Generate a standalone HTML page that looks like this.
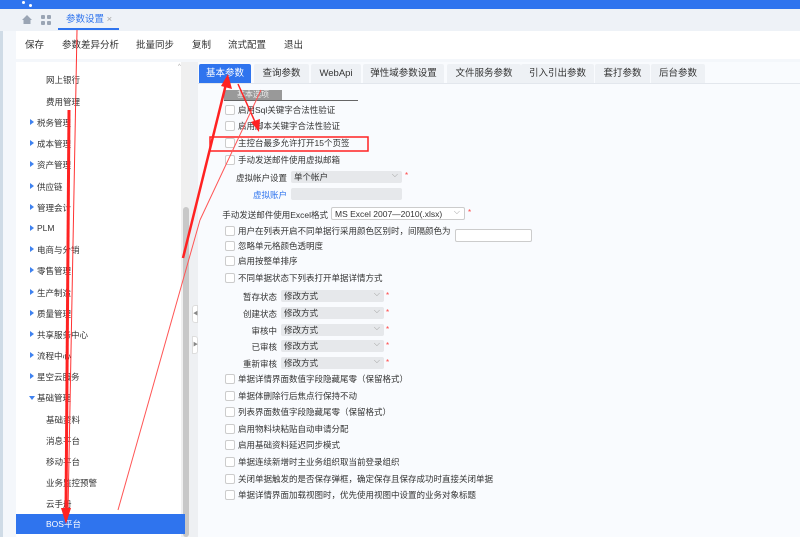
<!DOCTYPE html>
<html><head><meta charset="utf-8"><style>
*{margin:0;padding:0;box-sizing:border-box}
body{width:800px;height:537px;overflow:hidden;position:relative;background:#f4f7fb;font-family:"Liberation Sans","Noto Sans CJK SC",sans-serif;font-size:9px;color:#333}
.top{position:absolute;left:0;top:0;width:800px;height:9px;background:#2f74ee}
.tabbar{position:absolute;left:0;top:9px;width:800px;height:22px;background:#eef2f7}
.tb{position:absolute;left:16px;top:31px;width:784px;height:28px;background:#fff}
.tb span{position:absolute;top:6px;font-size:9.5px;color:#333}
.left{position:absolute;left:16px;top:62px;width:172px;height:475px;background:#fff}
.scroll{position:absolute;left:181px;top:62px;width:9px;height:475px;background:#f0f0f0}
.thumb{position:absolute;left:183px;top:207px;width:6px;height:330px;background:#c8c8c8;border-radius:3px}
.split{position:absolute;left:190px;top:62px;width:8px;height:475px;background:#eef0f3}
.item{position:absolute;font-size:8.5px;color:#333}
.tri{position:absolute;width:0;height:0;border-top:3.5px solid transparent;border-bottom:3.5px solid transparent;border-left:4px solid #3f82f0}
.right{position:absolute;left:198px;top:62px;width:602px;height:475px;background:#f9fbfe}
.tab{position:absolute;top:64px;height:19px;background:#eef1f5;font-size:9.5px;color:#333;text-align:center;line-height:19px;border-radius:2px 2px 0 0}
.cb{position:absolute;left:225px;width:10px;height:10px;border:1px solid #ccc;background:#fff;border-radius:2px}
.lb{position:absolute;left:238px;font-size:8.5px;color:#333}
.sel{position:absolute;height:12px;background:#e6e8eb;border-radius:2px;font-size:8.5px;line-height:12px;padding-left:3px}
.sel:after{content:"⌵";position:absolute;right:4px;top:-2px;color:#999;font-size:8px}
.star{position:absolute;color:#f44;font-size:8px}
.rl{position:absolute;font-size:8.5px;color:#333;text-align:right}
</style></head><body>
<div style="position:absolute;left:0;top:0;width:3px;height:537px;background:#cfdbe6"></div>
<div class="top"></div>
<div style="position:absolute;left:22px;top:1px;width:3px;height:3px;background:#fff;border-radius:50%"></div>
<div style="position:absolute;left:29px;top:4px;width:3px;height:3px;background:#fff;border-radius:50%"></div>
<div class="tabbar"></div>
<div style="position:absolute;left:22px;top:15px;width:10px;height:9px;"><svg width="10" height="9"><path d="M0 5L5 0L10 5H8.5V9H1.5V5Z" fill="#9aa5b4"/></svg></div>
<div style="position:absolute;left:41px;top:15px"><svg width="10" height="10"><rect x="0" y="0" width="4" height="4" rx="1" fill="#9aa5b4"/><rect x="6" y="0" width="4" height="4" rx="1" fill="#9aa5b4"/><rect x="0" y="6" width="4" height="4" rx="1" fill="#9aa5b4"/><rect x="6" y="6" width="4" height="4" rx="1" fill="#9aa5b4"/></svg></div>
<div style="position:absolute;left:58px;top:10px;width:61px;height:20px;border-bottom:2px solid #2f74ee;font-size:9.5px;color:#2f74ee;line-height:20px;padding-left:8px">参数设置 <span style="color:#aaa">×</span></div>
<div class="tb"><span style="left:9px">保存</span><span style="left:46px">参数差异分析</span><span style="left:120px">批量同步</span><span style="left:176px">复制</span><span style="left:212px">流式配置</span><span style="left:268px">退出</span></div>
<div class="left"></div>
<div class="scroll"></div><div class="thumb"></div>
<div style="position:absolute;left:178px;top:64px;font-size:6px;color:#aaa">^</div>
<div class="split"></div>
<div style="position:absolute;left:192px;top:305px;width:6px;height:18px;background:#fff;border:1px solid #ddd;border-radius:3px 0 0 3px;font-size:5px;color:#888;line-height:16px">◀</div>
<div style="position:absolute;left:192px;top:336px;width:6px;height:18px;background:#fff;border:1px solid #ddd;border-radius:0 3px 3px 0;font-size:5px;color:#888;line-height:16px">▶</div>

<div class="item" style="left:46px;top:74px">网上银行</div>
<div class="item" style="left:46px;top:96px">费用管理</div>
<div class="tri" style="left:30px;top:119px"></div><div class="item" style="left:37px;top:117px">税务管理</div>
<div class="tri" style="left:30px;top:140px"></div><div class="item" style="left:37px;top:138px">成本管理</div>
<div class="tri" style="left:30px;top:161px"></div><div class="item" style="left:37px;top:159px">资产管理</div>
<div class="tri" style="left:30px;top:183px"></div><div class="item" style="left:37px;top:181px">供应链</div>
<div class="tri" style="left:30px;top:204px"></div><div class="item" style="left:37px;top:202px">管理会计</div>
<div class="tri" style="left:30px;top:225px"></div><div class="item" style="left:37px;top:223px">PLM</div>
<div class="tri" style="left:30px;top:246px"></div><div class="item" style="left:37px;top:244px">电商与分销</div>
<div class="tri" style="left:30px;top:267px"></div><div class="item" style="left:37px;top:265px">零售管理</div>
<div class="tri" style="left:30px;top:289px"></div><div class="item" style="left:37px;top:287px">生产制造</div>
<div class="tri" style="left:30px;top:310px"></div><div class="item" style="left:37px;top:308px">质量管理</div>
<div class="tri" style="left:30px;top:331px"></div><div class="item" style="left:37px;top:329px">共享服务中心</div>
<div class="tri" style="left:30px;top:352px"></div><div class="item" style="left:37px;top:350px">流程中心</div>
<div class="tri" style="left:30px;top:373px"></div><div class="item" style="left:37px;top:371px">星空云服务</div>
<div style="position:absolute;left:29px;top:396px;border-left:3.5px solid transparent;border-right:3.5px solid transparent;border-top:4px solid #3f82f0"></div><div class="item" style="left:37px;top:392px">基础管理</div>
<div class="item" style="left:46px;top:414px">基础资料</div>
<div class="item" style="left:46px;top:435px">消息平台</div>
<div class="item" style="left:46px;top:456px">移动平台</div>
<div class="item" style="left:46px;top:477px">业务监控预警</div>
<div class="item" style="left:46px;top:498px">云手册</div>
<div style="position:absolute;left:16px;top:514px;width:169px;height:20px;background:#2f74ee"></div>
<div class="item" style="left:46px;top:518px;color:#fff">BOS平台</div>

<div class="right"></div>
<div style="position:absolute;left:198px;top:83px;width:602px;height:1px;background:#e3e7ed"></div>
<div class="tab" style="left:199px;width:52px;background:#2f74ee;color:#fff">基本参数</div>
<div class="tab" style="left:254px;width:55px">查询参数</div>
<div class="tab" style="left:311px;width:50px">WebApi</div>
<div class="tab" style="left:363px;width:81px">弹性域参数设置</div>
<div class="tab" style="left:447px;width:74px">文件服务参数</div>
<div class="tab" style="left:521px;width:73px">引入引出参数</div>
<div class="tab" style="left:595px;width:55px">套打参数</div>
<div class="tab" style="left:651px;width:54px">后台参数</div>

<div style="position:absolute;left:224px;top:90px;width:58px;height:10px;background:#999;color:#eee;font-size:8px;line-height:10px;text-align:center">基本选项</div>
<div style="position:absolute;left:224px;top:100px;width:134px;height:1px;background:#666"></div>

<div class="cb" style="top:105px"></div><div class="lb" style="top:104px">启用Sql关键字合法性验证</div>
<div class="cb" style="top:121px"></div><div class="lb" style="top:120px">启用脚本关键字合法性验证</div>
<div class="cb" style="top:138px"></div><div class="lb" style="top:137px">主控台最多允许打开15个页签</div>
<div class="cb" style="top:155px"></div><div class="lb" style="top:154px">手动发送邮件使用虚拟邮箱</div>
<div class="rl" style="left:220px;width:67px;top:172px">虚拟帐户设置</div>
<div class="sel" style="left:291px;top:171px;width:111px">单个帐户</div><div class="star" style="left:405px;top:171px">*</div>
<div class="rl" style="left:220px;width:67px;top:189px;color:#2f74ee">虚拟账户</div>
<div style="position:absolute;left:291px;top:188px;width:111px;height:12px;background:#e6e8eb;border-radius:2px"></div>
<div class="rl" style="left:220px;width:108px;top:209px">手动发送邮件使用Excel格式</div>
<div class="sel" style="left:331px;top:207px;width:134px;height:13px;background:#fff;border:1px solid #ccc">MS Excel 2007—2010(.xlsx)</div><div class="star" style="left:468px;top:208px">*</div>
<div class="cb" style="top:226px"></div><div class="lb" style="top:225px">用户在列表开启不同单据行采用颜色区别时，间隔颜色为</div>
<div style="position:absolute;left:455px;top:229px;width:77px;height:13px;background:#fff;border:1px solid #ccc;border-radius:2px"></div>
<div class="cb" style="top:241px"></div><div class="lb" style="top:240px">忽略单元格颜色透明度</div>
<div class="cb" style="top:256px"></div><div class="lb" style="top:255px">启用按整单排序</div>
<div class="cb" style="top:273px"></div><div class="lb" style="top:272px">不同单据状态下列表打开单据详情方式</div>
<div class="rl" style="left:230px;width:47px;top:291px">暂存状态</div><div class="sel" style="left:281px;top:290px;width:103px">修改方式</div><div class="star" style="left:386px;top:291px">*</div>
<div class="rl" style="left:230px;width:47px;top:308px">创建状态</div><div class="sel" style="left:281px;top:307px;width:103px">修改方式</div><div class="star" style="left:386px;top:308px">*</div>
<div class="rl" style="left:230px;width:47px;top:325px">审核中</div><div class="sel" style="left:281px;top:324px;width:103px">修改方式</div><div class="star" style="left:386px;top:325px">*</div>
<div class="rl" style="left:230px;width:47px;top:341px">已审核</div><div class="sel" style="left:281px;top:340px;width:103px">修改方式</div><div class="star" style="left:386px;top:341px">*</div>
<div class="rl" style="left:230px;width:47px;top:358px">重新审核</div><div class="sel" style="left:281px;top:357px;width:103px">修改方式</div><div class="star" style="left:386px;top:358px">*</div>
<div class="cb" style="top:374px"></div><div class="lb" style="top:373px">单据详情界面数值字段隐藏尾零（保留格式）</div>
<div class="cb" style="top:391px"></div><div class="lb" style="top:390px">单据体删除行后焦点行保持不动</div>
<div class="cb" style="top:407px"></div><div class="lb" style="top:406px">列表界面数值字段隐藏尾零（保留格式）</div>
<div class="cb" style="top:424px"></div><div class="lb" style="top:423px">启用物料块粘贴自动申请分配</div>
<div class="cb" style="top:440px"></div><div class="lb" style="top:439px">启用基础资料延迟同步模式</div>
<div class="cb" style="top:457px"></div><div class="lb" style="top:456px">单据连续新增时主业务组织取当前登录组织</div>
<div class="cb" style="top:474px"></div><div class="lb" style="top:473px">关闭单据触发的是否保存弹框，确定保存且保存成功时直接关闭单据</div>
<div class="cb" style="top:490px"></div><div class="lb" style="top:489px">单据详情界面加载视图时，优先使用视图中设置的业务对象标题</div>

<svg style="position:absolute;left:0;top:0" width="800" height="537">
<rect x="210" y="137" width="158" height="14" fill="none" stroke="#f22" stroke-width="1.5"/>
<line x1="77" y1="30" x2="68" y2="512" stroke="#f33" stroke-width="1"/>
<line x1="69" y1="110" x2="66" y2="512" stroke="#f22" stroke-width="3"/>
<path d="M61 508L66 524L71 508Z" fill="#f22"/>
<line x1="183" y1="258" x2="226" y2="84" stroke="#f22" stroke-width="2.5"/>
<path d="M221 86L228 74L232 89Z" fill="#f22"/>
<line x1="238" y1="84" x2="256" y2="124" stroke="#f22" stroke-width="1.5"/>
<path d="M251 122L259 132L260 119Z" fill="#f22"/>
<line x1="200" y1="220" x2="118" y2="510" stroke="#f55" stroke-width="1"/>
<line x1="261" y1="90" x2="200" y2="220" stroke="#f55" stroke-width="1"/>
</svg>
</body></html>
